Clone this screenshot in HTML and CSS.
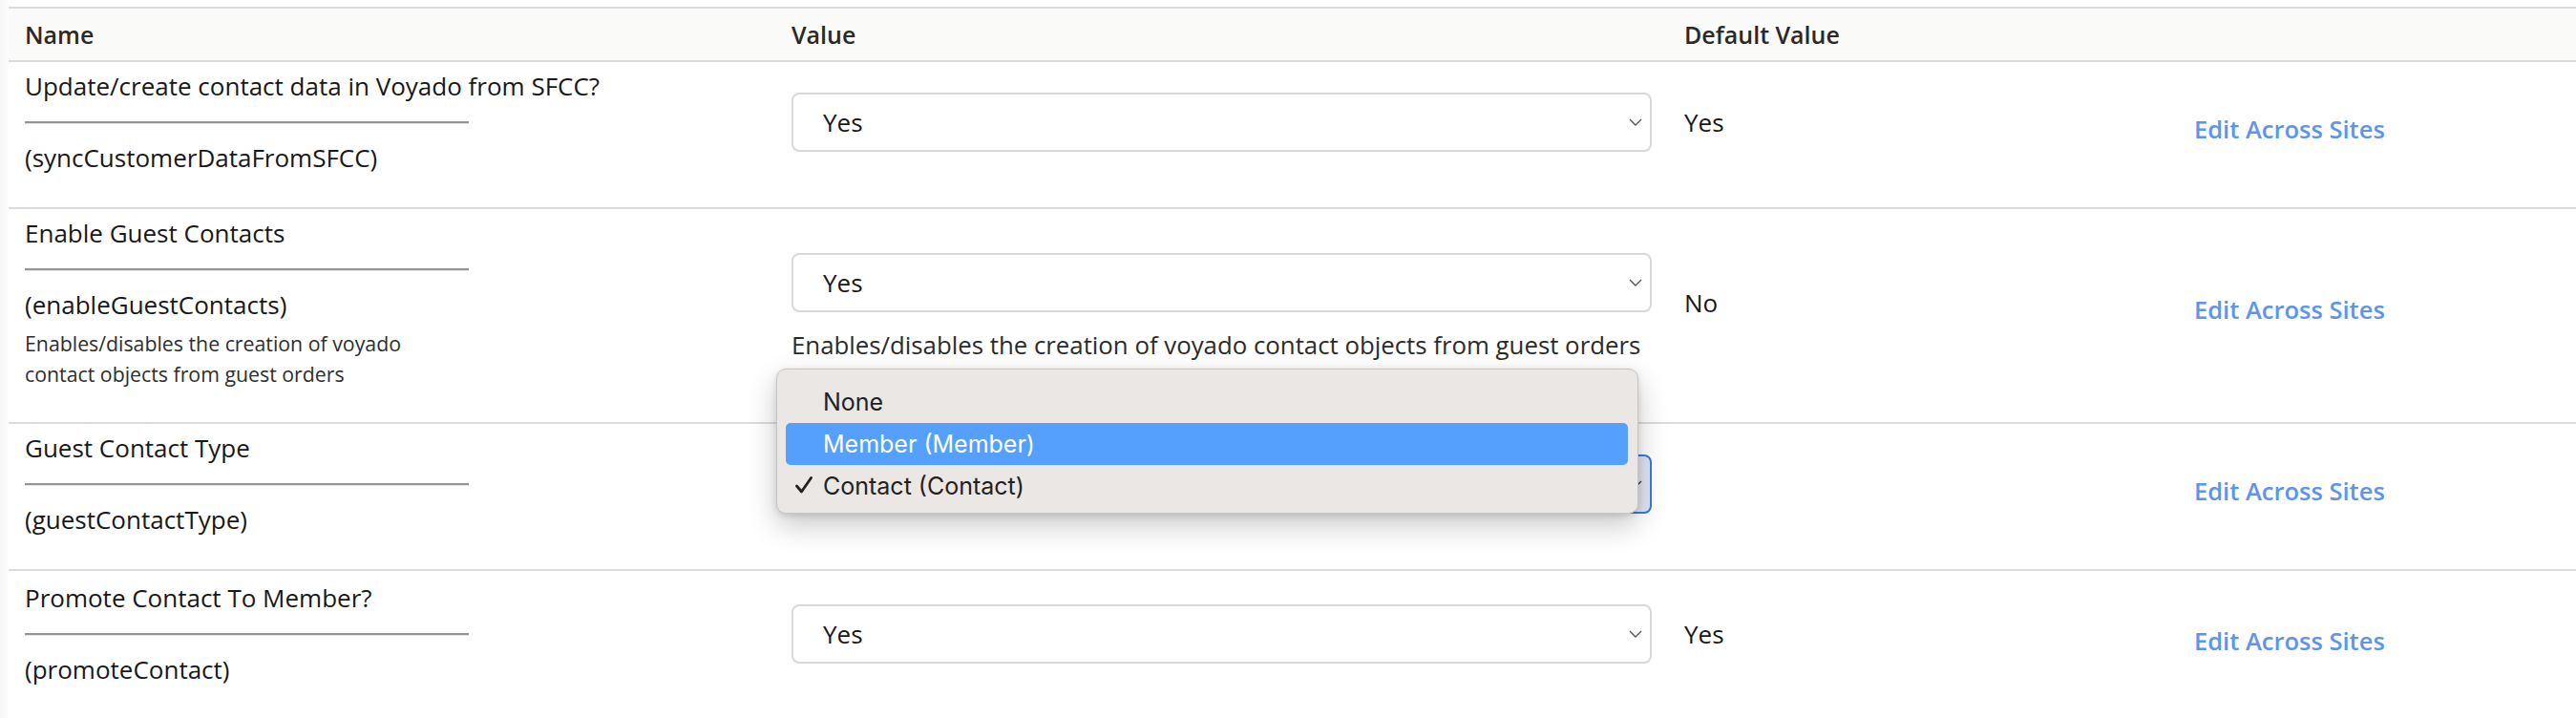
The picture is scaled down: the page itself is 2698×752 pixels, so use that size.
FILE: index.html
```html
<!DOCTYPE html>
<html lang="en">
<head>
<meta charset="utf-8">
<title>Custom Preferences</title>
<link rel="stylesheet" href="styles.css">
</head>
<body>
<div class="page">
  <div class="table">
    <div class="row head">
      <div class="cell name-col">Name</div>
      <div class="cell">Value</div>
      <div class="cell">Default Value</div>
      <div class="cell"></div>
    </div>

    <div class="row">
      <div class="cell name-col">
        <div class="title">Update/create contact data in Voyado from SFCC?</div>
        <div class="rule"></div>
        <div class="pref-id">(syncCustomerDataFromSFCC)</div>
      </div>
      <div class="cell value-col">
        <div class="select">
          <span>Yes</span>
          <svg class="chev" width="14" height="8" viewBox="0 0 14 8"><path d="M1 1 L7 7 L13 1" fill="none" stroke="#555452" stroke-width="1.4"/></svg>
        </div>
      </div>
      <div class="cell default-col">Yes</div>
      <div class="cell action-col"><a class="link" href="#">Edit Across Sites</a></div>
    </div>

    <div class="row">
      <div class="cell name-col">
        <div class="title">Enable Guest Contacts</div>
        <div class="rule"></div>
        <div class="pref-id">(enableGuestContacts)</div>
        <div class="small-desc">Enables/disables the creation of voyado<br>contact objects from guest orders</div>
      </div>
      <div class="cell value-col">
        <div class="select">
          <span>Yes</span>
          <svg class="chev" width="14" height="8" viewBox="0 0 14 8"><path d="M1 1 L7 7 L13 1" fill="none" stroke="#555452" stroke-width="1.4"/></svg>
        </div>
        <div class="value-desc">Enables/disables the creation of voyado contact objects from guest orders</div>
      </div>
      <div class="cell default-col">No</div>
      <div class="cell action-col"><a class="link" href="#">Edit Across Sites</a></div>
    </div>

    <div class="row">
      <div class="cell name-col">
        <div class="title">Guest Contact Type</div>
        <div class="rule"></div>
        <div class="pref-id">(guestContactType)</div>
      </div>
      <div class="cell value-col">
        <div class="select-wrap">
          <div class="select focused">
            <span>Contact (Contact)</span>
            <svg class="chev" width="14" height="8" viewBox="0 0 14 8"><path d="M1 1 L7 7 L13 1" fill="none" stroke="#3a3a3a" stroke-width="1.4"/></svg>
          </div>
          <div class="menu">
            <div class="menu-item">None</div>
            <div class="menu-item active">Member (Member)</div>
            <div class="menu-item">
              <svg class="check" width="20" height="20" viewBox="0 0 20 20"><path d="M2.5 11 L7.5 17 L17.5 2.5" fill="none" stroke="#222" stroke-width="2.8" stroke-linecap="round" stroke-linejoin="round"/></svg>
              Contact (Contact)
            </div>
          </div>
        </div>
      </div>
      <div class="cell default-col"></div>
      <div class="cell action-col"><a class="link" href="#">Edit Across Sites</a></div>
    </div>

    <div class="row last">
      <div class="cell name-col">
        <div class="title">Promote Contact To Member?</div>
        <div class="rule"></div>
        <div class="pref-id">(promoteContact)</div>
      </div>
      <div class="cell value-col">
        <div class="select">
          <span>Yes</span>
          <svg class="chev" width="14" height="8" viewBox="0 0 14 8"><path d="M1 1 L7 7 L13 1" fill="none" stroke="#555452" stroke-width="1.4"/></svg>
        </div>
      </div>
      <div class="cell default-col">Yes</div>
      <div class="cell action-col"><a class="link" href="#">Edit Across Sites</a></div>
    </div>
  </div>
</div>
</body>
</html>
```

FILE: styles.css
```css
html, body {
  margin: 0;
  padding: 0;
}

body {
  background: #ffffff;
  font-family: "Open Sans", "Noto Sans", sans-serif;
  color: #181818;
  overflow: hidden;
}

.page {
  padding: 7px 0 0 9px;
  background: linear-gradient(to right, #f5f5f5 0, #fcfcfc 8px, #ffffff 9px);
  min-height: 745px;
}

.table {
  background: #ffffff;
}

.row {
  display: grid;
  grid-template-columns: 820px 935px 534px 1fr;
  border-bottom: 2px solid #dbdbdb;
}

.row.last {
  border-bottom: none;
  padding-top: 3px;
}

.head {
  border-top: 2px solid #dbdbdb;
  background: #fafaf9;
  height: 54px;
  align-items: center;
  font-weight: 600;
  font-size: 25px;
  color: #2b2826;
}

.head .cell {
  padding: 0;
}

.head .name-col {
  padding-left: 17px;
}

.cell {
  box-sizing: border-box;
}

.name-col {
  padding: 8px 0 35px 17px;
}

.title,
.pref-id {
  font-size: 26px;
  line-height: 34px;
  white-space: nowrap;
}

.rule {
  width: 465px;
  border-top: 2px solid #949494;
  border-bottom: 1px solid #e6e6e6;
  margin: 20px 0 18px;
}

.small-desc {
  margin-top: 8px;
  font-size: 21.3px;
  line-height: 31.5px;
  color: #2e2e2e;
}

.value-col {
  padding: 8px 34px 35px 0;
  display: flex;
  flex-direction: column;
  justify-content: center;
}

.select-wrap {
  position: relative;
}

.select {
  box-sizing: border-box;
  height: 62px;
  border: 2px solid #d9d9d9;
  border-radius: 8px;
  background: #ffffff;
  display: flex;
  align-items: center;
  justify-content: space-between;
  padding: 0 8px 0 31px;
  font-size: 26px;
  color: #181818;
}

.select.focused {
  border-color: #2d7fe3;
  background: #e2e5f2;
}

.value-desc {
  margin: 18px 0 -8px;
  font-size: 25.8px;
  line-height: 32px;
  color: #2b2b2b;
  white-space: nowrap;
}

.default-col {
  padding: 8px 0 35px 0;
  display: flex;
  align-items: center;
  font-size: 26px;
  color: #181818;
}

.action-col {
  padding: 22px 0 35px 0;
  display: flex;
  align-items: center;
}

.link {
  font-size: 25.5px;
  font-weight: 600;
  color: #5e94ea;
  text-decoration: none;
}

.menu {
  position: absolute;
  top: -90px;
  left: -16px;
  width: 903px;
  height: 152px;
  box-sizing: border-box;
  padding: 12px 10px 8px 9px;
  background: #ebe7e4;
  border: 1px solid #c8c4c1;
  border-radius: 10px;
  box-shadow: 0 12px 30px rgba(0, 0, 0, 0.22), 0 2px 6px rgba(0, 0, 0, 0.12);
  font-family: "Inter", "Roboto", sans-serif;
  font-size: 25px;
  color: #222222;
  z-index: 5;
}

.menu-item {
  position: relative;
  height: 44px;
  display: flex;
  align-items: center;
  padding-left: 39px;
  border-radius: 5px;
}

.menu-item.active {
  background: #56a0fd;
  color: #ffffff;
}

.check {
  position: absolute;
  left: 9px;
  top: 11px;
}
```
